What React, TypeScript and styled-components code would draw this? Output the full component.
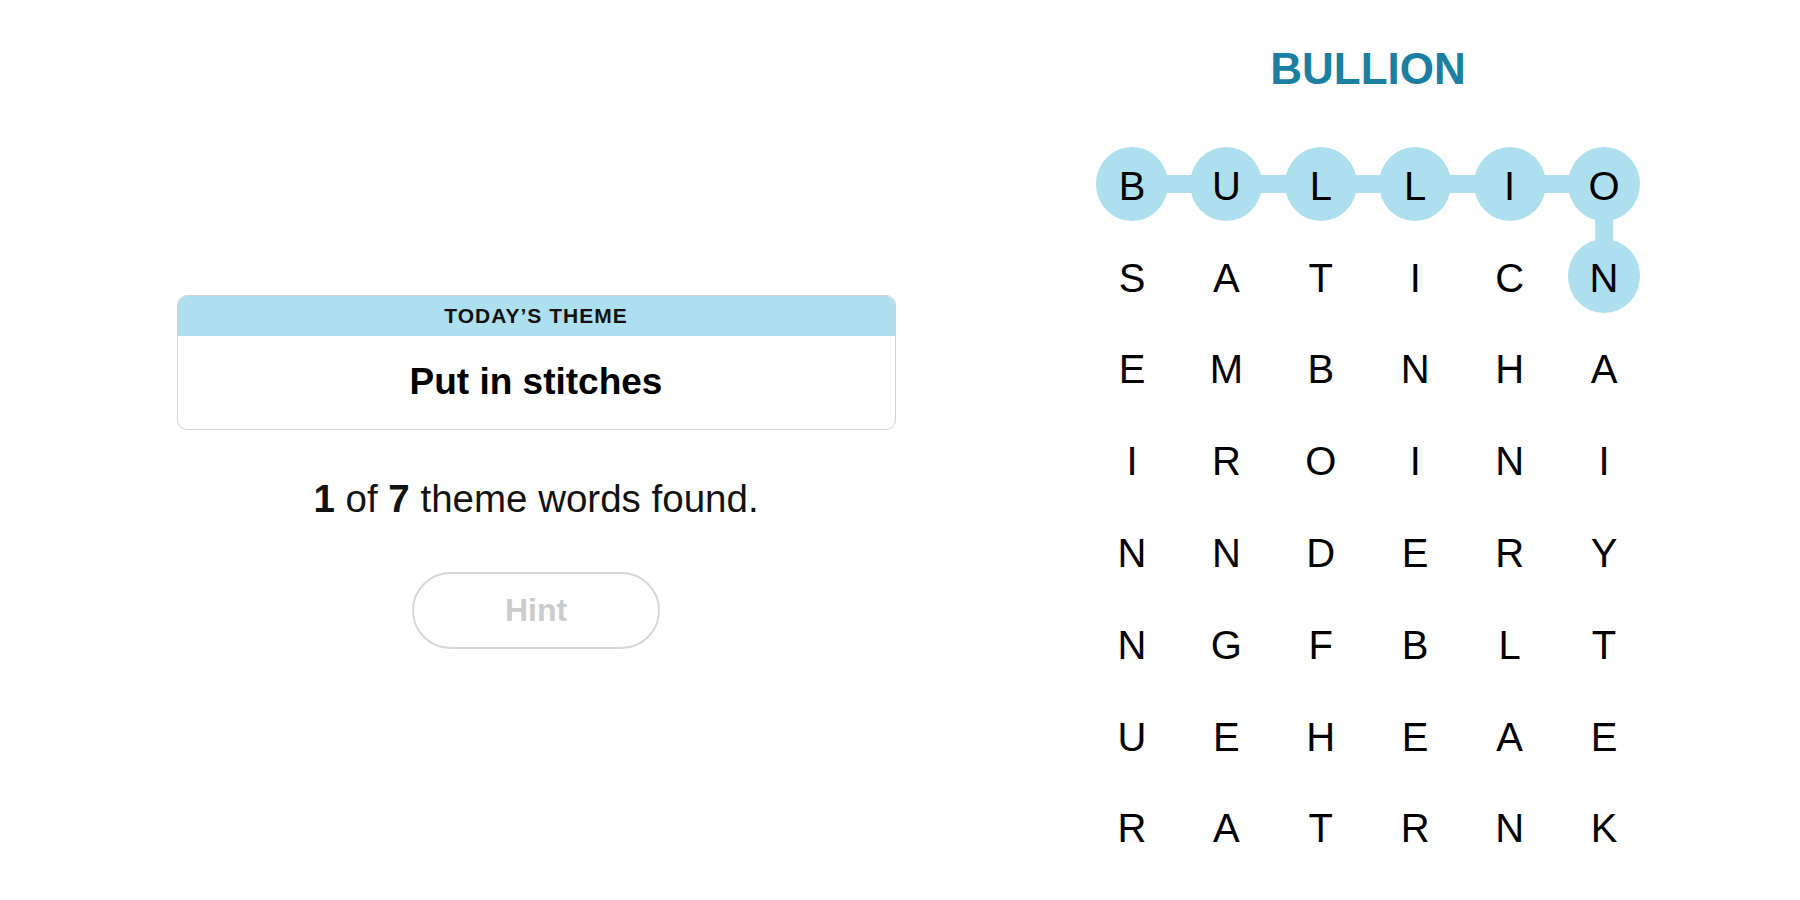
import React from "react";
import styled, { createGlobalStyle } from "styled-components";

const COL_W = 94.4;
const ROW_H = 91.8;
const BLUE = "#aedfee";

const GRID = [
  "BULLIO",
  "SATICN",
  "EMBNHA",
  "IROINI",
  "NNDERY",
  "NGFBLT",
  "UEHEAE",
  "RATRNK",
];

// cells of the word that has been found, in the order it was traced
const FOUND_PATH: [number, number][] = [
  [0, 0],
  [0, 1],
  [0, 2],
  [0, 3],
  [0, 4],
  [0, 5],
  [1, 5],
];

const GlobalStyle = createGlobalStyle`
  html, body {
    margin: 0;
    padding: 0;
    background: #fff;
    font-family: "Liberation Sans", Arial, sans-serif;
    color: #000;
  }
`;

const StyledPage = styled.div`
  display: grid;
  grid-template-columns: 1072px 592px;
  height: 900px;
  overflow: hidden;
`;

const StyledLeft = styled.section`
  display: flex;
  flex-direction: column;
  align-items: center;
  padding-top: 295px;
`;

const StyledThemeCard = styled.div`
  width: 719px;
  height: 135px;
  box-sizing: border-box;
  border: 1px solid #d3d3d3;
  border-radius: 10px;
  overflow: hidden;
  display: flex;
  flex-direction: column;
`;

const StyledThemeHeader = styled.div`
  height: 40px;
  background-color: ${BLUE};
  display: flex;
  align-items: center;
  justify-content: center;
  font-size: 21px;
  font-weight: bold;
  color: #121212;
  letter-spacing: 1px;
`;

const StyledThemeBody = styled.div`
  flex: 1;
  display: flex;
  align-items: center;
  justify-content: center;
  font-size: 37px;
  font-weight: bold;
  padding-bottom: 2px;
`;

const StyledProgress = styled.p`
  margin: 47px 0 0;
  font-size: 38.5px;
  line-height: 44px;
  color: #121212;

  > b {
    font-weight: bold;
  }
`;

const StyledHintButton = styled.button`
  margin-top: 51px;
  width: 248px;
  height: 77px;
  border: 2px solid #d6d6d6;
  border-radius: 40px;
  background: #fff;
  color: #cbcbcb;
  font-family: inherit;
  font-size: 32px;
  font-weight: bold;
  cursor: default;
`;

const StyledRight = styled.section`
  display: flex;
  flex-direction: column;
  align-items: center;
  padding-top: 44px;
`;

const StyledWord = styled.h1`
  margin: 0;
  font-size: 44px;
  line-height: 50px;
  font-weight: bold;
  color: #1b7fa2;
`;

const StyledBoard = styled.div`
  position: relative;
  margin-top: 44px;
  display: grid;
  grid-template-columns: repeat(6, ${COL_W}px);
  grid-auto-rows: ${ROW_H}px;
`;

const StyledTrail = styled.svg`
  position: absolute;
  inset: 0;
  z-index: 0;
  pointer-events: none;
`;

const StyledCell = styled.div`
  position: relative;
  z-index: 1;
  display: flex;
  align-items: center;
  justify-content: center;
`;

const StyledLetter = styled.span<{ $found: boolean }>`
  width: 72px;
  height: 74px;
  border-radius: 50%;
  display: flex;
  align-items: center;
  justify-content: center;
  padding-top: 5px;
  box-sizing: border-box;
  font-size: 40px;
  background-color: ${({ $found }) => ($found ? BLUE : "transparent")};
`;

const isFound = (r: number, c: number) =>
  FOUND_PATH.some(([pr, pc]) => pr === r && pc === c);

const Board = () => {
  const width = COL_W * 6;
  const height = ROW_H * GRID.length;
  const points = FOUND_PATH.map(
    ([r, c]) => `${(c + 0.5) * COL_W},${(r + 0.5) * ROW_H}`
  ).join(" ");

  return (
    <StyledBoard>
      <StyledTrail width={width} height={height} viewBox={`0 0 ${width} ${height}`}>
        <polyline
          points={points}
          fill="none"
          stroke={BLUE}
          strokeWidth={18}
          strokeLinejoin="round"
        />
      </StyledTrail>
      {GRID.map((row, r) =>
        row.split("").map((letter, c) => (
          <StyledCell key={`${r}-${c}`}>
            <StyledLetter $found={isFound(r, c)}>{letter}</StyledLetter>
          </StyledCell>
        ))
      )}
    </StyledBoard>
  );
};

export default function App() {
  return (
    <>
      <GlobalStyle />
      <StyledPage>
        <StyledLeft>
          <StyledThemeCard>
            <StyledThemeHeader>TODAY’S THEME</StyledThemeHeader>
            <StyledThemeBody>Put in stitches</StyledThemeBody>
          </StyledThemeCard>
          <StyledProgress>
            <b>1</b> of <b>7</b> theme words found.
          </StyledProgress>
          <StyledHintButton type="button">Hint</StyledHintButton>
        </StyledLeft>
        <StyledRight>
          <StyledWord>BULLION</StyledWord>
          <Board />
        </StyledRight>
      </StyledPage>
    </>
  );
}
